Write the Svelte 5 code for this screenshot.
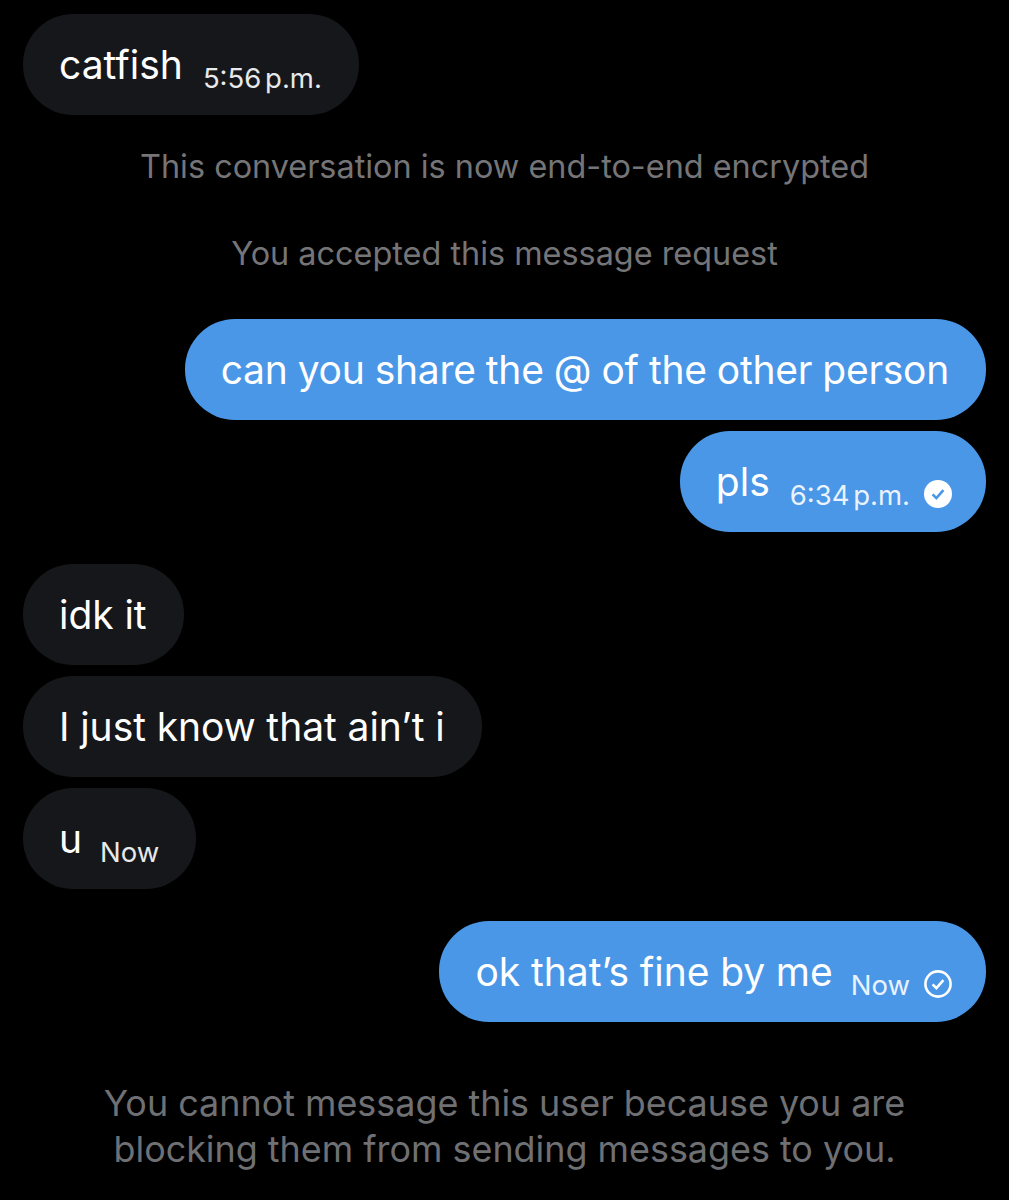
<script lang="ts">
	const items = [
		{ kind: 'in', text: 'catfish', time: '5:56 p.m.' },
		{ kind: 'notice', text: 'This conversation is now end-to-end encrypted' },
		{ kind: 'notice', text: 'You accepted this message request' },
		{ kind: 'out', text: 'can you share the @ of the other person', tight: true },
		{ kind: 'out', text: 'pls', time: '6:34 p.m.', status: 'read' },
		{ kind: 'in', text: 'idk it' },
		{ kind: 'in', text: 'I just know that ain’t i' },
		{ kind: 'in', text: 'u', time: 'Now' },
		{ kind: 'out', text: 'ok that’s fine by me', time: 'Now', status: 'sent' }
	];
</script>

<main class="thread">
	{#each items as item, i}
		{#if item.kind === 'notice'}
			<p class="notice">{item.text}</p>
		{:else}
			<div
				class="row {item.kind}"
				class:gap={i > 0 && items[i - 1].kind !== item.kind && items[i - 1].kind !== 'notice'}
				class:after-notice={i > 0 && items[i - 1].kind === 'notice'}
			>
				<div class="bubble">
					<span class="text" class:tight={item.tight}>{item.text}</span>
					{#if item.time}
						<span class="time" class:now={item.time === 'Now'}>{item.time}</span>
					{/if}
					{#if item.status === 'read'}
						<svg class="tick" viewBox="0 0 28 28" aria-hidden="true">
							<circle cx="14" cy="14" r="14" fill="#fff" />
							<path d="M8.6 14.4l3.8 3.8 7-8" fill="none" stroke="#4a97e8" stroke-width="2.6" />
						</svg>
					{:else if item.status === 'sent'}
						<svg class="tick" viewBox="0 0 28 28" aria-hidden="true">
							<circle cx="14" cy="14" r="12.6" fill="none" stroke="#fff" stroke-width="2.6" />
							<path d="M8.6 14.4l3.8 3.8 7-8" fill="none" stroke="#fff" stroke-width="2.6" />
						</svg>
					{/if}
				</div>
			</div>
		{/if}
	{/each}
	<p class="blocked">
		You cannot message this user because you are<br />blocking them from sending messages to you.
	</p>
</main>

<style>
	:global(body) {
		background: #000;
	}

	.thread {
		height: 1200px;
		box-sizing: border-box;
		padding: 14px 23px 0;
		display: flex;
		flex-direction: column;
		font-family: Inter, 'Liberation Sans', sans-serif;
		overflow: hidden;
	}

	.row {
		display: flex;
		margin-bottom: 11px;
	}

	.row.out {
		justify-content: flex-end;
	}

	.row.gap {
		margin-top: 21px;
	}

	.row.after-notice {
		margin-top: 22.5px;
	}

	.bubble {
		height: 101px;
		box-sizing: border-box;
		padding: 0 37px 0 36px;
		border-radius: 50px;
		display: flex;
		align-items: center;
		color: #fff;
		white-space: nowrap;
	}

	.in .bubble {
		background: #16171a;
	}

	.out .bubble {
		background: #4a97e8;
	}

	.text {
		font-size: 39px;
		word-spacing: -0.3px;
	}

	.text.tight {
		letter-spacing: -0.27px;
		word-spacing: -0.5px;
	}

	.time {
		font-size: 27.5px;
		word-spacing: -4px;
		margin-left: 20px;
		position: relative;
		top: 13px;
		color: #e7e9ea;
	}

	.time.now {
		margin-left: 18px;
	}

	.out .time {
		color: #eaf3fd;
	}

	.tick {
		width: 28px;
		height: 28px;
		margin-left: 14px;
		margin-right: -3px;
		position: relative;
		top: 12px;
	}

	.notice {
		margin: 0;
		height: 87px;
		display: flex;
		align-items: center;
		justify-content: center;
		color: #757578;
		font-size: 32.4px;
	}

	.notice:nth-child(2) {
		margin-top: -3.5px;
	}

	.blocked {
		margin: 47px 0 0;
		text-align: center;
		color: #6f7073;
		font-size: 35.9px;
		line-height: 46px;
	}
</style>
